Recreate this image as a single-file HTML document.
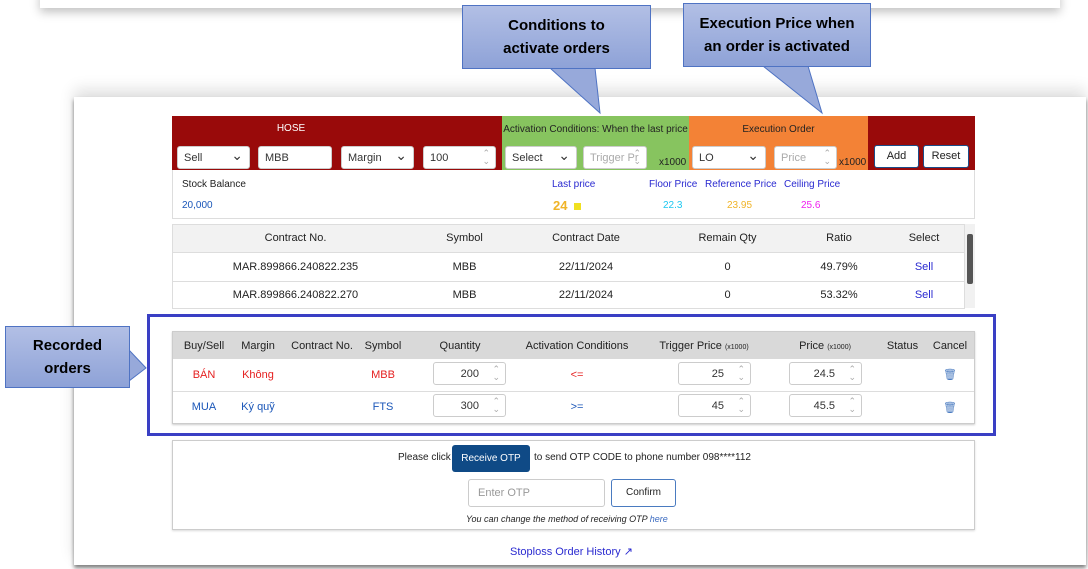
<!DOCTYPE html><html><head><meta charset="utf-8"><style>
*{box-sizing:border-box;margin:0;padding:0}
body{width:1088px;height:569px;position:relative;overflow:hidden;background:#fff;font-family:"Liberation Sans",sans-serif;font-size:11px;color:#222}
.a{position:absolute}
.panel{left:74px;top:97px;width:1012px;height:468px;background:#fff;box-shadow:0 -8px 14px rgba(0,0,0,.12),0 3px 4px rgba(0,0,0,.5)}
.topbar{left:40px;top:-10px;width:1020px;height:18px;background:#fff;box-shadow:0 4px 10px rgba(0,0,0,.25)}
.inp{position:absolute;background:#fff;border:1px solid #ccc;border-radius:3px;height:23px;font-size:11px;padding:5px 6px;color:#333}
.sel:after{content:"⌄";position:absolute;right:6px;top:0px;font-size:14px;color:#333}
.spin:after{content:"⌃\A⌄";white-space:pre;position:absolute;right:5px;top:2px;font-size:9px;line-height:8px;color:#aaa}
.btn{position:absolute;background:#fff;border:1px solid #1a4e8a;border-radius:3px;font-size:11px;text-align:center;line-height:21px;height:23px}
table{border-collapse:collapse;width:100%}
td,th{text-align:center;font-size:11px}
.callout{position:absolute;background:linear-gradient(#b2bfe5,#8ea2d7);border:1px solid #4f73c3;font-weight:bold;font-size:15px;color:#000;text-align:center;line-height:23px;display:flex;align-items:center;justify-content:center}
</style></head><body>
<div class="a topbar"></div>
<div class="a panel"></div>
<!-- header bar -->
<div class="a" style="left:172px;top:116px;width:803px;height:54px;background:#990a0a"></div>
<div class="a" style="left:502px;top:116px;width:187px;height:54px;background:#87c45f"></div>
<div class="a" style="left:689px;top:116px;width:179px;height:54px;background:#f38236"></div>
<div class="a" style="left:172px;top:123px;width:238px;text-align:center;color:#fff;font-size:10px">HOSE</div>
<div class="a" style="left:502px;top:124px;width:187px;text-align:center;font-size:10px">Activation Conditions: When the last price</div>
<div class="a" style="left:689px;top:124px;width:179px;text-align:center;font-size:10px">Execution Order</div>
<div class="inp sel" style="left:177px;top:146px;width:73px">Sell</div>
<div class="inp" style="left:258px;top:146px;width:74px">MBB</div>
<div class="inp sel" style="left:341px;top:146px;width:73px">Margin</div>
<div class="inp spin" style="left:423px;top:146px;width:73px">100</div>
<div class="inp sel" style="left:505px;top:146px;width:72px">Select</div>
<div class="inp spin" style="left:583px;top:146px;width:64px;color:#aaa;overflow:hidden">Trigger Pr</div>
<div class="a" style="left:659px;top:157px;font-size:10px">x1000</div>
<div class="inp sel" style="left:692px;top:146px;width:74px">LO</div>
<div class="inp spin" style="left:774px;top:146px;width:63px;color:#aaa">Price</div>
<div class="a" style="left:839px;top:157px;font-size:10px">x1000</div>
<div class="btn" style="left:874px;top:145px;width:45px">Add</div>
<div class="btn" style="left:923px;top:145px;width:46px">Reset</div>
<!-- info -->
<div class="a" style="left:172px;top:170px;width:803px;height:49px;border:1px solid #ddd;border-top:none"></div>
<div class="a" style="left:182px;top:179px;font-size:10px">Stock Balance</div>
<div class="a" style="left:182px;top:200px;font-size:10px;color:#1a56b8">20,000</div>
<div class="a" style="left:552px;top:179px;font-size:10px;color:#2a2ad0">Last price</div>
<div class="a" style="left:553px;top:198px;font-size:13px;font-weight:bold;color:#f0b428">24 <span style="display:inline-block;width:7px;height:7px;background:#f0e020;margin-left:3px"></span></div>
<div class="a" style="left:649px;top:179px;font-size:10px;color:#2a2ad0">Floor Price</div>
<div class="a" style="left:663px;top:200px;font-size:10px;color:#1ec8f0">22.3</div>
<div class="a" style="left:705px;top:179px;font-size:10px;color:#2a2ad0">Reference Price</div>
<div class="a" style="left:727px;top:200px;font-size:10px;color:#f0b428">23.95</div>
<div class="a" style="left:784px;top:179px;font-size:10px;color:#2a2ad0">Ceiling Price</div>
<div class="a" style="left:801px;top:200px;font-size:10px;color:#f020f0">25.6</div>
<!-- contracts table -->
<div class="a" style="left:172px;top:224px;width:793px;border:1px solid #ddd">
<table><tr style="background:#f2f2f2;height:27px"><th style="width:245px;font-weight:normal;color:#222">Contract No.</th><th style="width:93px;font-weight:normal">Symbol</th><th style="width:150px;font-weight:normal">Contract Date</th><th style="width:133px;font-weight:normal">Remain Qty</th><th style="width:90px;font-weight:normal">Ratio</th><th style="font-weight:normal">Select</th></tr>
<tr style="height:29px;border-top:1px solid #ddd"><td>MAR.899866.240822.235</td><td>MBB</td><td>22/11/2024</td><td>0</td><td>49.79%</td><td style="color:#2a2ad0">Sell</td></tr>
<tr style="height:27px;border-top:1px solid #ddd"><td>MAR.899866.240822.270</td><td>MBB</td><td>22/11/2024</td><td>0</td><td>53.32%</td><td style="color:#2a2ad0">Sell</td></tr></table></div>
<div class="a" style="left:965px;top:224px;width:10px;height:84px;background:#f1f1f1"></div>
<div class="a" style="left:967px;top:234px;width:6px;height:50px;background:#555;border-radius:2px"></div>
<!-- recorded orders -->
<div class="a" style="left:147px;top:314px;width:849px;height:122px;border:3px solid #3a3fc4"></div>
<div class="a" style="left:172px;top:331px;width:803px;border:1px solid #ccc;box-shadow:0 1px 2px rgba(0,0,0,.2)">
<table style="font-size:10px"><tr style="background:#d9d9d9;height:27px">
<th style="width:62px;font-weight:normal">Buy/Sell</th><th style="width:46px;font-weight:normal">Margin</th><th style="width:82px;font-weight:normal">Contract No.</th><th style="width:40px;font-weight:normal">Symbol</th><th style="width:114px;font-weight:normal">Quantity</th><th style="width:120px;font-weight:normal">Activation Conditions</th><th style="width:134px;font-weight:normal">Trigger Price <small style="font-size:7px">(x1000)</small></th><th style="width:108px;font-weight:normal">Price <small style="font-size:7px">(x1000)</small></th><th style="width:47px;font-weight:normal">Status</th><th style="font-weight:normal">Cancel</th></tr>
<tr style="height:32px;color:#e52020"><td>BÁN</td><td>Không</td><td></td><td>MBB</td><td></td><td>&lt;=</td><td></td><td></td><td></td><td style="color:#4a7bc0">🗑</td></tr>
<tr style="height:32px;color:#1a56b8;border-top:1px solid #ddd"><td>MUA</td><td>Ký quỹ</td><td></td><td>FTS</td><td></td><td>&gt;=</td><td></td><td></td><td></td><td style="color:#4a7bc0">🗑</td></tr></table></div>
<div class="inp spin" style="left:433px;top:362px;width:73px;text-align:right;padding-right:26px">200</div>
<div class="inp spin" style="left:678px;top:362px;width:73px;text-align:right;padding-right:26px">25</div>
<div class="inp spin" style="left:789px;top:362px;width:73px;text-align:right;padding-right:26px">24.5</div>
<div class="inp spin" style="left:433px;top:394px;width:73px;text-align:right;padding-right:26px">300</div>
<div class="inp spin" style="left:678px;top:394px;width:73px;text-align:right;padding-right:26px">45</div>
<div class="inp spin" style="left:789px;top:394px;width:73px;text-align:right;padding-right:26px">45.5</div>
<!-- OTP -->
<div class="a" style="left:172px;top:440px;width:803px;height:90px;border:1px solid #ccc;box-shadow:0 1px 2px rgba(0,0,0,.15)"></div>
<div class="a" style="left:398px;top:452px;font-size:10px">Please click</div>
<div class="a" style="left:452px;top:445px;width:78px;height:27px;background:#0f4a86;border-radius:3px;color:#fff;font-size:10px;text-align:center;line-height:27px">Receive OTP</div>
<div class="a" style="left:534px;top:452px;font-size:10px">to send OTP CODE to phone number 098****112</div>
<div class="inp" style="left:468px;top:479px;width:137px;height:28px;color:#999;font-size:11px;padding:7px 9px">Enter OTP</div>
<div class="btn" style="left:611px;top:479px;width:65px;height:28px;line-height:26px;font-size:10px;border-color:#4a7bc0">Confirm</div>
<div class="a" style="left:466px;top:514px;font-size:9px;font-style:italic">You can change the method of receiving OTP <span style="color:#3a6ac0">here</span></div>
<div class="a" style="left:510px;top:545px;font-size:11px;color:#2a2ad0">Stoploss Order History <span style="font-size:11px">↗</span></div>
<!-- callouts -->
<svg class="a" style="left:0;top:0" width="1088" height="569">
<defs><linearGradient id="g" x1="0" y1="0" x2="0" y2="1"><stop offset="0" stop-color="#b2bfe5"/><stop offset="1" stop-color="#8ea2d7"/></linearGradient></defs>
<polygon points="550,68 595,68 600,113" fill="#97a9da" stroke="#4f73c3"/>
<polygon points="763,66 808,66 822,113" fill="#97a9da" stroke="#4f73c3"/>
<polygon points="129,350 129,381 146,368" fill="#97a9da" stroke="#4f73c3"/>
</svg>
<div class="callout" style="left:462px;top:5px;width:189px;height:64px">Conditions to<br>activate orders</div>
<div class="callout" style="left:683px;top:3px;width:188px;height:64px">Execution Price when<br>an order is activated</div>
<div class="callout" style="left:5px;top:326px;width:125px;height:62px;font-size:15px">Recorded<br>orders</div>
</body></html>
